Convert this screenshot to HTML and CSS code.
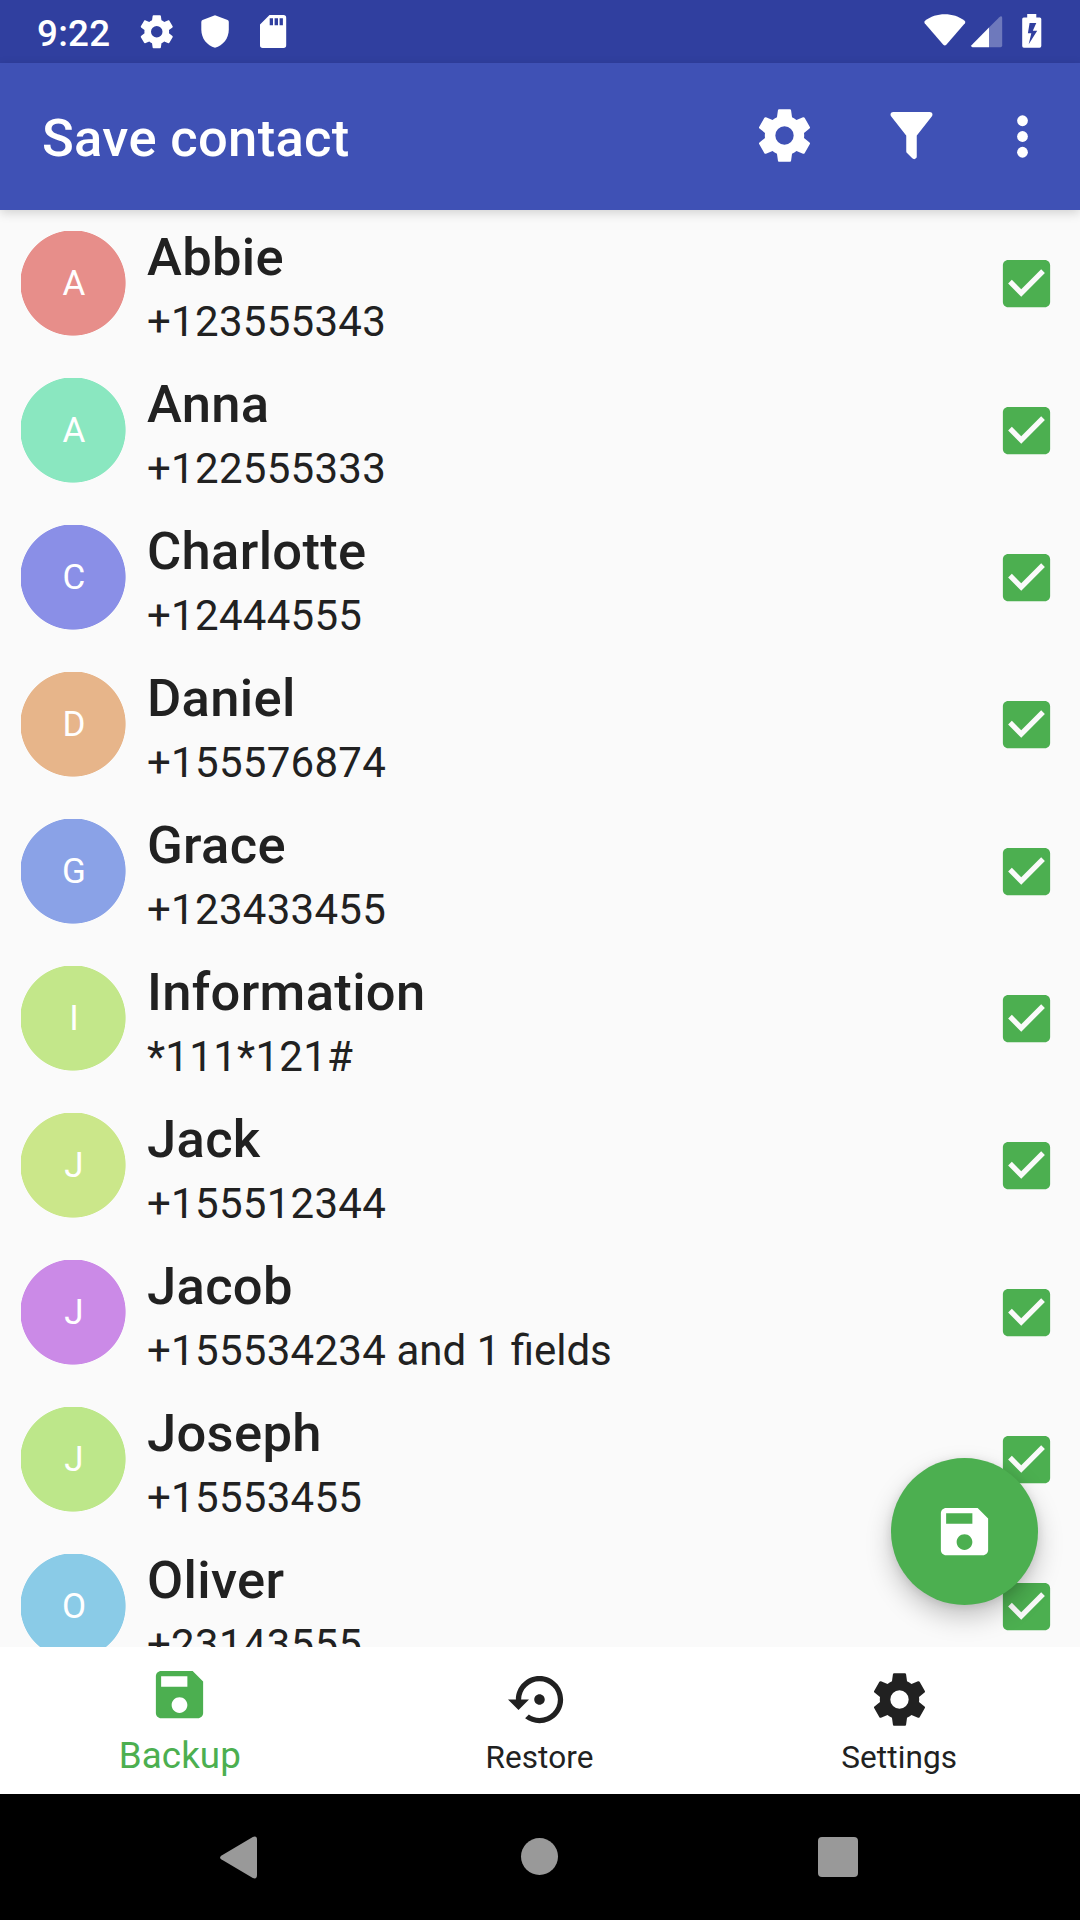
FILE: index.html
```html
<!DOCTYPE html>
<html lang="en">
<head>
<meta charset="utf-8">
<title>Save contact</title>
<link rel="stylesheet" href="styles.css">
</head>
<body>
<svg class="defs" width="0" height="0">
  <symbol id="gear" viewBox="0 0 24 24"><path d="M12,15.5A3.5,3.5 0 0,1 8.5,12A3.5,3.5 0 0,1 12,8.5A3.5,3.5 0 0,1 15.5,12A3.5,3.5 0 0,1 12,15.5M19.43,12.97C19.47,12.65 19.5,12.33 19.5,12C19.5,11.67 19.47,11.34 19.43,11L21.54,9.37C21.73,9.22 21.78,8.95 21.66,8.73L19.66,5.27C19.54,5.05 19.27,4.96 19.05,5.05L16.56,6.05C16.04,5.66 15.5,5.32 14.87,5.07L14.5,2.42C14.46,2.18 14.25,2 14,2H10C9.75,2 9.54,2.18 9.5,2.42L9.13,5.07C8.5,5.32 7.96,5.66 7.44,6.05L4.95,5.05C4.73,4.96 4.46,5.05 4.34,5.27L2.34,8.73C2.21,8.95 2.27,9.22 2.46,9.37L4.57,11C4.53,11.34 4.5,11.67 4.5,12C4.5,12.33 4.53,12.65 4.57,12.97L2.46,14.63C2.27,14.78 2.21,15.05 2.34,15.27L4.34,18.73C4.46,18.95 4.73,19.03 4.95,18.95L7.44,17.94C7.96,18.34 8.5,18.68 9.13,18.93L9.5,21.58C9.54,21.82 9.75,22 10,22H14C14.25,22 14.46,21.82 14.5,21.58L14.87,18.93C15.5,18.67 16.04,18.34 16.56,17.94L19.05,18.95C19.27,19.03 19.54,18.95 19.66,18.73L21.66,15.27C21.78,15.05 21.73,14.78 21.54,14.63L19.43,12.97Z"/></symbol>
  <symbol id="save" viewBox="0 0 24 24"><path d="M17 3H5c-1.11 0-2 .9-2 2v14c0 1.1.89 2 2 2h14c1.1 0 2-.9 2-2V7l-4-4zm-5 16c-1.66 0-3-1.34-3-3s1.34-3 3-3 3 1.34 3 3-1.34 3-3 3zm3-10H5V5h10v4z"/></symbol>
  <symbol id="check" viewBox="0 0 24 24"><path d="M19 3H5c-1.11 0-2 .9-2 2v14c0 1.1.89 2 2 2h14c1.11 0 2-.9 2-2V5c0-1.1-.89-2-2-2zm-9 14l-5-5 1.41-1.41L10 14.17l7.59-7.59L19 8l-9 9z"/></symbol>
</svg>
<div class="screen">
  <header class="status">
    <span class="clock">9:22</span>
    <svg class="st-gear"><use href="#gear"/></svg>
    <svg class="st-shield" viewBox="0 0 28 33"><path d="M14 .2 26.6 5Q27.800 5.500 27.800 7V14.500C27.800 23.500 22 30.500 14 32.800 6 30.500 .3 23.500 .3 14.500V7Q.3 5.500 1.500 5Z"/></svg>
    <svg class="st-card" viewBox="0 0 26 33"><path fill-rule="evenodd" d="M9.500 0H23.500Q26.200 0 26.200 2.700V30.300Q26.200 33 23.500 33H2.700Q0 33 0 30.300V9.500ZM9.700 3.300V10.300H13V3.300ZM14.600 3.300V10.300H18V3.300ZM19.600 3.300V10.300H22.900V3.300Z"/></svg>
    <span class="spacer"></span>
    <svg class="st-wifi" viewBox="0 0 42 32"><path d="M.7 9.200Q-.2 7.900 1 6.800C6.500 2.200 13.500 .2 20.800 .2S35 2.200 40.600 6.800Q41.800 7.900 40.900 9.200L22.300 30.800Q20.800 32.300 19.300 30.800Z"/></svg>
    <svg class="st-signal" viewBox="0 0 31 32"><path opacity=".3" d="M18 11.600 28.300 1.200Q29.300 .2 30.200 .2 31.200 .4 31.200 2V29.500Q31.200 31.200 29.500 31.200H18Z"/><path d="M18 11.600V31.200H1.500Q-.6 30.600 .5 29.200Z"/></svg>
    <svg class="st-battery" viewBox="0 0 20 34"><path fill-rule="evenodd" d="M5.200 0H14.300V3.400H17.800Q19.300 3.400 19.300 5V32Q19.300 33.700 17.600 33.700H1.900Q.2 33.700 .2 32V5Q.2 3.400 1.800 3.400H5.200ZM7.600 9 5.900 19.300H9.300L6.700 30.200 15.200 16.800H10.800L14.300 9Z"/></svg>
  </header>
  <div class="appbar">
    <h1>Save contact</h1>
    <svg class="icon"><use href="#gear"/></svg>
    <svg class="icon" viewBox="0 0 24 24"><path d="M14,12V19.88C14.04,20.18 13.94,20.5 13.71,20.71C13.32,21.1 12.69,21.1 12.3,20.71L10.29,18.7C10.06,18.47 9.96,18.16 10,17.87V12H9.97L4.21,4.62C3.87,4.19 3.95,3.56 4.38,3.22C4.57,3.08 4.78,3 5,3H19C19.22,3 19.43,3.08 19.62,3.22C20.05,3.56 20.13,4.19 19.79,4.62L14.03,12H14Z"/></svg>
    <svg class="icon more" viewBox="0 0 24 24"><circle cx="12" cy="6" r="2.050"/><circle cx="12" cy="12" r="2.050"/><circle cx="12" cy="18" r="2.050"/></svg>
  </div>
  <main class="content">
    <ul class="list">
      <li class="row"><span class="avatar red">A</span><div class="text"><b>Abbie</b><span>+123555343</span></div><svg class="icon box"><use href="#check"/></svg></li>
      <li class="row"><span class="avatar mint">A</span><div class="text"><b>Anna</b><span>+122555333</span></div><svg class="icon box"><use href="#check"/></svg></li>
      <li class="row"><span class="avatar indigo">C</span><div class="text"><b>Charlotte</b><span>+12444555</span></div><svg class="icon box"><use href="#check"/></svg></li>
      <li class="row"><span class="avatar sand">D</span><div class="text"><b>Daniel</b><span>+155576874</span></div><svg class="icon box"><use href="#check"/></svg></li>
      <li class="row"><span class="avatar blue">G</span><div class="text"><b>Grace</b><span>+123433455</span></div><svg class="icon box"><use href="#check"/></svg></li>
      <li class="row"><span class="avatar lime">I</span><div class="text"><b>Information</b><span>*111*121#</span></div><svg class="icon box"><use href="#check"/></svg></li>
      <li class="row"><span class="avatar pear">J</span><div class="text"><b>Jack</b><span>+155512344</span></div><svg class="icon box"><use href="#check"/></svg></li>
      <li class="row"><span class="avatar violet">J</span><div class="text"><b>Jacob</b><span>+155534234<small> and 1 fields</small></span></div><svg class="icon box"><use href="#check"/></svg></li>
      <li class="row"><span class="avatar green">J</span><div class="text"><b>Joseph</b><span>+15553455</span></div><svg class="icon box"><use href="#check"/></svg></li>
      <li class="row"><span class="avatar sky">O</span><div class="text"><b>Oliver</b><span>+23143555</span></div><svg class="icon box"><use href="#check"/></svg></li>
    </ul>
    <button class="fab" aria-label="Save"><svg class="icon"><use href="#save"/></svg></button>
  </main>
  <nav class="tabs">
    <a class="tab active"><svg class="icon"><use href="#save"/></svg><span>Backup</span></a>
    <a class="tab"><svg class="icon" viewBox="0 0 24 24"><path d="M14 12c0-1.100-.9-2-2-2s-2 .9-2 2 .9 2 2 2 2-.9 2-2zm-2-9c-4.970 0-9 4.030-9 9H0l4 4 4-4H5c0-3.870 3.130-7 7-7s7 3.130 7 7-3.130 7-7 7c-1.510 0-2.910-.49-4.060-1.300l-1.420 1.440C8.040 20.300 9.940 21 12 21c4.970 0 9-4.030 9-9s-4.030-9-9-9z"/></svg><span>Restore</span></a>
    <a class="tab"><svg class="icon"><use href="#gear"/></svg><span>Settings</span></a>
  </nav>
  <footer class="sysnav">
    <svg viewBox="0 0 37 43" width="37" height="43"><path d="M1.200 19.700 32.800 1Q37 -.6 37 3.500V39Q37 43.500 32.800 42L1.200 23.300Q-1.100 21.500 1.200 19.700Z"/></svg>
    <i class="home"></i>
    <i class="recent"></i>
  </footer>
</div>
</body>
</html>
```
FILE: styles.css
```css
* { box-sizing: border-box; }
body { margin: 0; font-family: Roboto, "Noto Sans", sans-serif; color: #212121; }
svg { display: block; flex: none; fill: currentColor; }
.defs { position: absolute; }
.screen { width: 1080px; height: 1920px; display: flex; flex-direction: column; overflow: hidden; background: #fafafa; }
.icon { width: 63px; height: 63px; }
.spacer { flex: 1; }

.status { height: 63px; flex: none; display: flex; align-items: flex-start; padding: 0 38px 0 37px; background: #303f9f; color: #fff; }
.clock { width: 100px; font-size: 36.750px; line-height: 43px; font-weight: 500; letter-spacing: .25px; padding-top: 12px; }
.st-gear { width: 39.500px; height: 39.500px; margin: 12px 0 0 .4px; }
.st-shield { width: 28px; height: 33px; margin: 15px 0 0 24.300px; }
.st-card { width: 26px; height: 33px; margin: 15px 0 0 31px; overflow: visible; }
.st-wifi { width: 42px; height: 32px; margin-top: 14px; }
.st-signal { width: 31px; height: 32px; margin: 15.700px 0 0 5px; overflow: visible; }
.st-battery { width: 20px; height: 34px; margin: 14px 0 0 20px; }

.appbar { height: 147px; flex: none; display: flex; align-items: center; padding: 0 26px 0 42px; background: #3f51b5; color: #fff; position: relative; z-index: 1; box-shadow: 0 3px 10px rgba(0, 0, 0, .16); }
.appbar h1 { flex: 1; margin: 0; padding-top: 3px; font-size: 52.500px; line-height: 62px; font-weight: 500; letter-spacing: .33px; }
.appbar .icon { margin: 0 64px 2px 0; }
.appbar .more { margin: 0 0 0 -16px; }

.content { flex: 1; min-height: 0; position: relative; overflow: hidden; }
.list { list-style: none; margin: 0; padding: 0; }
.row { height: 147px; display: flex; align-items: center; padding: 0 21px; }
.avatar { width: 105px; height: 105px; padding-left: 1px; display: flex; align-items: center; justify-content: center; color: #fff; font-size: 35px; background: radial-gradient(circle at 52px 52px, var(--tone) 52.200px, transparent 53px); }
.red { --tone: #e78e8a; }
.mint { --tone: #8ae7c0; }
.indigo { --tone: #8a8fe7; }
.sand { --tone: #e7b58a; }
.blue { --tone: #8aa2e7; }
.lime { --tone: #c3e78a; }
.pear { --tone: #cbe78a; }
.violet { --tone: #cb8ae7; }
.green { --tone: #bde78a; }
.sky { --tone: #8acbe7; }
.text { flex: 1; padding: 8px 0 0 21px; display: flex; flex-direction: column; }
.text b { font-size: 52.500px; line-height: 68px; font-weight: 500; letter-spacing: .33px; }
.text span { font-size: 42px; line-height: 61px; letter-spacing: .28px; }
.text small { font-size: inherit; letter-spacing: normal; }
.box { color: #4caf50; margin: 0 1px 0 0; }

.fab { position: absolute; right: 42px; bottom: 42px; width: 147px; height: 147px; padding: 0; border: 0; border-radius: 50%; display: flex; align-items: center; justify-content: center; background: #4caf50; color: #fff; box-shadow: 0 12px 26px rgba(0, 0, 0, .22), 0 2px 10px rgba(0, 0, 0, .1); }

.tabs { height: 147px; flex: none; display: flex; padding-right: 1px; background: #fff; }
.tab { flex: 1; display: flex; flex-direction: column; align-items: center; padding-top: 21px; font-size: 31.500px; line-height: 38px; letter-spacing: .1px; }
.tab span { margin-top: 8px; }
.tab.active { color: #4caf50; padding-top: 16px; font-size: 36.750px; }
.tab.active span { margin-top: 11px; }

.sysnav { flex: 1; max-height: 126px; display: flex; align-items: center; justify-content: space-between; padding: 0 222px 0 220px; background: #000; color: #999; }
.home { width: 37px; height: 37px; border-radius: 50%; background: #999; margin: 0 0 1px 3px; }
.recent { width: 40px; height: 40px; border-radius: 4px; background: #999; }
```
